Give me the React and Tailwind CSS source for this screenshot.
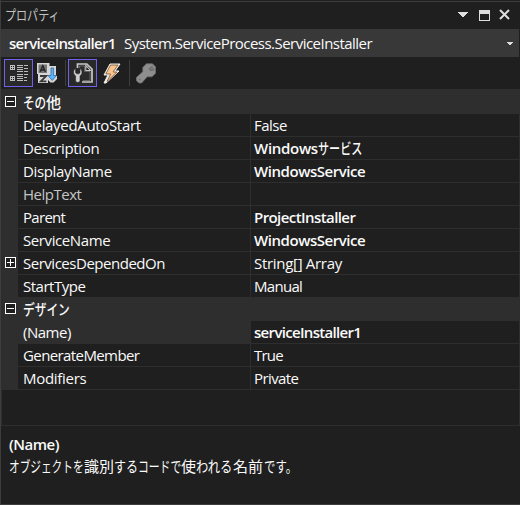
const textFont =
  'font-["Segoe_UI","Open_Sans","Noto_Sans_CJK_JP",sans-serif]';

const rows = [
  {
    category: true,
    name: "その他",
    parts: [
      { text: "その", width: "w-[23px]", scale: "scale-x-[0.77]" },
      { text: "他", width: "w-[15px]", scale: "" },
    ],
  },
  { name: "DelayedAutoStart", value: "False", nameStyle: "tracking-[-0.33px]" },
  {
    name: "Description",
    value: "Windows",
    kana: "サービス",
    bold: true,
    nameStyle: "tracking-[-0.35px]",
    valueStyle: "tracking-[-0.3px]",
  },
  { name: "DisplayName", value: "WindowsService", bold: true, nameStyle: "tracking-[-0.35px]", valueStyle: "tracking-[-0.45px]" },
  { name: "HelpText", value: "", dim: true, nameStyle: "tracking-[-0.5px]" },
  { name: "Parent", value: "ProjectInstaller", bold: true, nameStyle: "tracking-[-0.7px]", valueStyle: "tracking-[-0.58px]" },
  { name: "ServiceName", value: "WindowsService", bold: true, valueStyle: "tracking-[-0.45px]", nameStyle: "tracking-[-0.4px]" },
  { name: "ServicesDependedOn", value: "String[] Array", expandable: true, valueStyle: "tracking-[-0.3px]" },
  { name: "StartType", value: "Manual", valueStyle: "tracking-[-0.7px]" },
  {
    category: true,
    name: "デザイン",
    parts: [{ text: "デザイン", width: "w-[47px]", scale: "scale-x-[0.78]" }],
  },
  { name: "(Name)", value: "serviceInstaller1", bold: true, selected: true, valueStyle: "tracking-[-0.68px]" },
  { name: "GenerateMember", value: "True", nameStyle: "tracking-[-0.6px]", valueStyle: "tracking-[-0.8px]" },
  { name: "Modifiers", value: "Private", nameStyle: "tracking-[-0.3px]", valueStyle: "tracking-[-0.6px]" },
];

const description = [
  { text: "オブジェクトを", width: "w-[75px]", scale: "scale-x-[0.71]" },
  { text: "識別", width: "w-[30px]", scale: "" },
  { text: "する", width: "w-[24px]", scale: "scale-x-[0.8]" },
  { text: "コードで", width: "w-[43px]", scale: "scale-x-[0.72]" },
  { text: "使", width: "w-[15px]", scale: "" },
  { text: "われる", width: "w-[37px]", scale: "scale-x-[0.82]" },
  { text: "名前", width: "w-[31px]", scale: "" },
  { text: "です。", width: "w-[34px]", scale: "scale-x-[0.76]" },
];

// Kana is set narrower than kanji, as in a proportional UI face.
function Condensed({ parts }) {
  return (
    <span className="inline-flex whitespace-nowrap">
      {parts.map((part) => (
        <span key={part.text} className={part.width}>
          <span className={`inline-block origin-left ${part.scale}`}>{part.text}</span>
        </span>
      ))}
    </span>
  );
}

function Expander({ plus }) {
  return (
    <svg width="11" height="11" viewBox="0 0 11 11" shapeRendering="crispEdges" className="block">
      <rect x="0.5" y="0.5" width="10" height="10" fill="#1f1f1f" stroke="#fff" />
      <path d={plus ? "M2 5.5h7M5.5 2v7" : "M2 5.5h7"} stroke="#fff" />
    </svg>
  );
}

function Row({ row }) {
  if (row.category) {
    return (
      <div className="flex h-[23px] bg-[#2e2e2e]">
        <div className="w-[16px] pl-[3px] pt-[5px]">
          <Expander />
        </div>
        <div className="pl-[5px] text-[15px] font-medium leading-[23px] text-[#fafafa]">
          <Condensed parts={row.parts} />
        </div>
      </div>
    );
  }
  return (
    <div className="flex h-[23px] bg-[#2e2e2e] text-[15px] leading-[23px] text-[#fafafa]">
      <div className="w-[16px] shrink-0 pl-[3px] pt-[5px]">{row.expandable && <Expander plus />}</div>
      <div
        className={`h-[22px] w-[232px] shrink-0 whitespace-nowrap pl-[5px] ${row.nameStyle ?? "tracking-[-0.48px]"} ${row.selected ? "" : "bg-[#1f1f1f]"} ${row.dim ? "text-[#c4c4c4]" : ""}`}
      >
        {row.name}
      </div>
      <div
        className={`ml-px h-[22px] w-[268px] whitespace-nowrap bg-[#1f1f1f] pl-[3px] ${row.bold ? "font-semibold" : ""} ${row.valueStyle ?? "tracking-[-0.5px]"}`}
      >
        {row.value}
        {row.kana && (
          <span className="inline-block origin-left scale-x-[0.74] font-medium tracking-normal">{row.kana}</span>
        )}
      </div>
    </div>
  );
}

function CategorizedIcon() {
  return (
    <svg width="20" height="20" viewBox="0 0 20 20" shapeRendering="crispEdges">
      <path d="M1.5 2.5h4v4h-4zM1.5 13.5h4v4h-4z" fill="#1f1f1f" stroke="#bdbdbd" />
      <path d="M2 4.5h3M2 15.5h3M3.5 3v3M3.5 14v3" stroke="#bdbdbd" />
      <path
        d="M8 2.5h6M8 4.5h6M8 6.5h6M8 8.5h6M8 13.5h6M8 15.5h6M8 17.5h6M15 2.5h4M15 5.5h4M15 8.5h4M15 11.5h4M15 14.5h3M15 17.5h3M8 11.5h6"
        stroke="#bdbdbd"
      />
    </svg>
  );
}

function SortIcon() {
  return (
    <svg width="20" height="22" viewBox="0 0 20 22">
      <path d="M0 1h12.5v3H19v10h1v3l-3.5 3.5h-3L11 18v3H1v-9H0z" fill="#d6d6d6" />
      <path d="M1.5 2.5H10v8.5H1.5z" fill="#777777" />
      <path d="M3.2 9.8 5.8 3.8l2.6 6M4.3 8h3" stroke="#252525" strokeWidth="1.5" fill="none" />
      <path d="M3 14h6.2l-5.4 5.3h5.6" stroke="#3a3a3a" strokeWidth="1.8" fill="none" />
      <path d="M14 6h2.6v7.5h2.8L15.3 18.5 11 13.5h3z" fill="#5cb4ff" stroke="#2f6d9f" strokeWidth=".8" />
    </svg>
  );
}

function PagesIcon() {
  return (
    <svg width="20" height="20" viewBox="0 0 20 20">
      <path d="M4.5 5V1h9.3L19 6v13H9" fill="#2b2b2b" stroke="#c8c8c8" strokeWidth="1.7" />
      <path d="M6.5 5V3h5v5.5h5.5v9h-7" fill="none" stroke="#787878" strokeWidth=".7" />
      <path d="M12.8 2.5v5h4.6z" fill="#1f1f1f" stroke="#c8c8c8" strokeWidth="1.1" />
      <path
        d="M2.6 5.6C.2 6.8-.4 10.8 2.6 12.8V18.4L4.8 19.6 7 18.4v-5.6c3-2 2.4-6 0-7.2v4.2L5.8 10.8h-2L2.6 9.8z"
        fill="#d0d0d0"
        stroke="#292929"
        strokeWidth=".6"
      />
    </svg>
  );
}

function EventsIcon() {
  return (
    <svg width="18" height="21" viewBox="0 0 18 21">
      <path d="M7 1h10l-5 7h4L3 20H1l4-8H1z" fill="#eeeeee" stroke="#eeeeee" strokeLinejoin="round" />
      <path d="M7.6 2H15l-5 7h4L4 18.5 7.6 11H2.8z" fill="#f9c48e" stroke="#7e532c" strokeWidth=".8" />
    </svg>
  );
}

function KeyIcon() {
  return (
    <svg width="20" height="21" viewBox="0 0 20 21">
      <path
        d="M10.5.8h6l3 3v6.4l-3.5 3.6h-4.8L5.6 20H3L.3 17.6v-3L6.8 8.8V4.4z"
        fill="#8e8e8e"
        stroke="#6d6d6d"
        strokeWidth=".8"
      />
      <path d="m16.5 3-3.5 2.8 1.4 2 4.2-1.2" fill="#777777" stroke="#626262" strokeWidth=".8" />
      <circle cx="3.8" cy="16.6" r=".9" fill="#6d6d6d" />
    </svg>
  );
}

export default function App() {
  return (
    <div
      className={`flex h-[505px] w-[520px] flex-col overflow-hidden border-l border-[#3d3d3d] bg-[#1f1f1f] ${textFont}`}
    >
      <div className="mt-px flex h-[28px] shrink-0 border-t border-[#3d3d3d]">
        <div className="flex-1 pl-[4px] text-[14px] leading-[25px] text-[#c4c4c4]">
          <span className="inline-block origin-left scale-x-[0.79]">プロパティ</span>
        </div>
        <svg width="63" height="27" viewBox="0 0 63 27" shapeRendering="crispEdges">
          <path d="M1 10h10v1h-1v1h-1v1h-1v1h-1v1H5v-1H4v-1H3v-1H2v-1H1z" fill="#dedede" />
          <path d="M22 8h11v11H22zM23 12v6h9V12z" fillRule="evenodd" fill="#dedede" />
          <path d="m43 8 9 9m0-9-9 9" stroke="#dedede" strokeWidth="2" shapeRendering="auto" />
        </svg>
      </div>

      <div className="mr-px flex h-[28px] shrink-0 items-center bg-[#383838] pl-[8px] pr-[6px] text-[15px] text-[#fafafa]">
        <span className="w-[115px] font-semibold tracking-[-0.72px]">serviceInstaller1</span>
        <span className="flex-1 tracking-[-0.53px]">System.ServiceProcess.ServiceInstaller</span>
        <svg width="6" height="3" viewBox="0 0 6 3" shapeRendering="crispEdges">
          <path d="M0 0h6v1H5v1H4v1H2V2H1V1H0z" fill="#dedede" />
        </svg>
      </div>

      <div className="flex h-[32px] shrink-0 items-center pl-[3px]">
        <button className="flex h-[28px] w-[29px] items-center justify-center border border-[#7160e8] bg-[#292929]">
          <CategorizedIcon />
        </button>
        <div className="ml-[4px]"><SortIcon /></div>
        <div className="ml-[8px] h-[26px] w-px bg-[#3d3d3d]" />
        <button className="ml-[2px] flex h-[28px] w-[29px] items-center justify-center border border-[#7160e8] bg-[#292929]">
          <PagesIcon />
        </button>
        <div className="ml-[6px]"><EventsIcon /></div>
        <div className="ml-[8px] h-[26px] w-px bg-[#3d3d3d]" />
        <div className="ml-[6px]"><KeyIcon /></div>
      </div>

      <div className="h-[337px] shrink-0 border border-[#2e2e2e]">
        <div className="h-px bg-[#2e2e2e]" />
        {rows.map((row) => (
          <Row key={row.name} row={row} />
        ))}
      </div>

      <div className="min-h-0 flex-1 border-b border-[#3d3d3d] pl-[8px] pt-[7px] text-[15px] leading-[22px] text-[#fafafa]">
        <div className="font-semibold tracking-[-0.5px]">(Name)</div>
        <Condensed parts={description} />
      </div>
    </div>
  );
}
